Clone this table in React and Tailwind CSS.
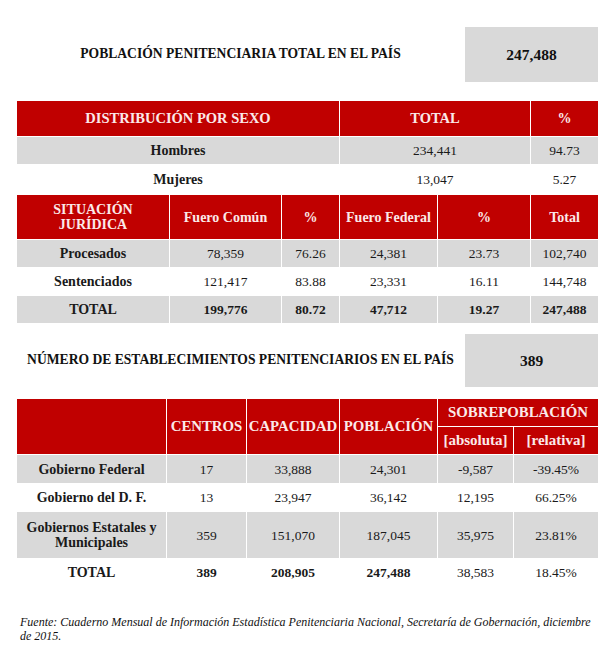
import React from "react";

const RED = "bg-[#c00000] text-[#fbe9e9] font-bold";
const GRAY = "bg-[#d9d9d9]";
const cell = "border border-white p-0 text-center align-middle";

const sexRows = [
  { label: "Hombres", total: "234,441", pct: "94.73", bg: GRAY },
  { label: "Mujeres", total: "13,047", pct: "5.27", bg: "bg-white" },
];

const legalRows = [
  { label: "Procesados", v: ["78,359", "76.26", "24,381", "23.73", "102,740"], bg: GRAY },
  { label: "Sentenciados", v: ["121,417", "83.88", "23,331", "16.11", "144,748"], bg: "bg-white" },
  { label: "TOTAL", v: ["199,776", "80.72", "47,712", "19.27", "247,488"], bg: GRAY, bold: true },
];

const govRows = [
  { label: "Gobierno Federal", v: ["17", "33,888", "24,301", "-9,587", "-39.45%"], bg: GRAY, h: "h-[29px]" },
  { label: "Gobierno del D. F.", v: ["13", "23,947", "36,142", "12,195", "66.25%"], bg: "bg-white", h: "h-[28px]" },
  {
    label: (
      <>
        Gobiernos Estatales y
        <br />
        Municipales
      </>
    ),
    v: ["359", "151,070", "187,045", "35,975", "23.81%"],
    bg: GRAY,
    h: "h-[47px]",
  },
  { label: "TOTAL", v: ["389", "208,905", "247,488", "38,583", "18.45%"], bg: "bg-white", h: "h-[28px]", boldUpTo: 3 },
];

function Banner({ title, value, className = "" }) {
  return (
    <div className={`flex items-stretch ${className}`}>
      <div className="flex-1 flex items-center justify-center font-bold text-[13.6px] text-[#111]">{title}</div>
      <div className={`w-[133px] ${GRAY} flex items-center justify-center font-bold text-[15.5px] text-[#111]`}>
        {value}
      </div>
    </div>
  );
}

export default function App() {
  return (
    <div className="w-[616px] h-[649px] bg-white pl-4 pt-[27px] text-[#1a1a1a] overflow-hidden font-['Liberation_Serif','Times_New_Roman',serif]">
      <div className="w-[582px]">
        <Banner title="POBLACIÓN PENITENCIARIA TOTAL EN EL PAÍS" value="247,488" className="h-[55px]" />

        <table className="mt-[18px] w-full table-fixed border-collapse text-[13.5px] leading-[15px]">
          <colgroup>
            <col className="w-[153px]" />
            <col className="w-[112px]" />
            <col className="w-[58px]" />
            <col className="w-[98px]" />
            <col className="w-[93px]" />
            <col className="w-[68px]" />
          </colgroup>
          <tbody>
            <tr className="h-[36px]">
              <td colSpan={3} className={`${cell} ${RED} text-[14.5px]`}>DISTRIBUCIÓN POR SEXO</td>
              <td colSpan={2} className={`${cell} ${RED} text-[14.5px]`}>TOTAL</td>
              <td className={`${cell} ${RED} text-[14px]`}>%</td>
            </tr>
            {sexRows.map((r, i) => (
              <tr key={r.label} className={`${i === 0 ? "h-[28px]" : "h-[30px]"} ${r.bg}`}>
                <td colSpan={3} className={`${cell} font-bold text-[14px]`}>{r.label}</td>
                <td colSpan={2} className={cell}>{r.total}</td>
                <td className={cell}>{r.pct}</td>
              </tr>
            ))}
            <tr className="h-[45px] text-[14px]">
              <td className={`${cell} ${RED}`}>
                SITUACIÓN
                <br />
                JURÍDICA
              </td>
              <td className={`${cell} ${RED}`}>Fuero Común</td>
              <td className={`${cell} ${RED}`}>%</td>
              <td className={`${cell} ${RED}`}>Fuero Federal</td>
              <td className={`${cell} ${RED}`}>%</td>
              <td className={`${cell} ${RED}`}>Total</td>
            </tr>
            {legalRows.map(r => (
              <tr key={r.label} className={`h-[28px] ${r.bg}`}>
                <td className={`${cell} font-bold text-[14px]`}>{r.label}</td>
                {r.v.map((v, j) => (
                  <td key={j} className={`${cell} ${r.bold ? "font-bold" : ""}`}>
                    {v}
                  </td>
                ))}
              </tr>
            ))}
          </tbody>
        </table>

        <Banner
          title="NÚMERO DE ESTABLECIMIENTOS PENITENCIARIOS EN EL PAÍS"
          value="389"
          className="mt-[10px] h-[53px]"
        />

        <table className="mt-[11px] w-full table-fixed border-collapse text-[13.5px] leading-[15px]">
          <colgroup>
            <col className="w-[150px]" />
            <col className="w-[80px]" />
            <col className="w-[93px]" />
            <col className="w-[98px]" />
            <col className="w-[76px]" />
            <col className="w-[85px]" />
          </colgroup>
          <tbody>
            <tr className="h-[28px] text-[14.8px]">
              <td rowSpan={2} className={`${cell} ${RED}`} />
              <td rowSpan={2} className={`${cell} ${RED}`}>CENTROS</td>
              <td rowSpan={2} className={`${cell} ${RED}`}>CAPACIDAD</td>
              <td rowSpan={2} className={`${cell} ${RED}`}>POBLACIÓN</td>
              <td colSpan={2} className={`${cell} ${RED}`}>SOBREPOBLACIÓN</td>
            </tr>
            <tr className="h-[28px] text-[15px]">
              <td className={`${cell} ${RED}`}>[absoluta]</td>
              <td className={`${cell} ${RED}`}>[relativa]</td>
            </tr>
            {govRows.map((r, i) => (
              <tr key={i} className={`${r.h} ${r.bg}`}>
                <td className={`${cell} font-bold text-[14px]`}>{r.label}</td>
                {r.v.map((v, j) => (
                  <td key={j} className={`${cell} ${r.boldUpTo && j < r.boldUpTo ? "font-bold" : ""}`}>
                    {v}
                  </td>
                ))}
              </tr>
            ))}
          </tbody>
        </table>

        <p className="mt-[28px] pl-1 w-[576px] italic text-[12px] leading-[14px] text-[#111]">
          Fuente: Cuaderno Mensual de Información Estadística Penitenciaria Nacional, Secretaría de Gobernación, diciembre
          de 2015.
        </p>
      </div>
    </div>
  );
}
